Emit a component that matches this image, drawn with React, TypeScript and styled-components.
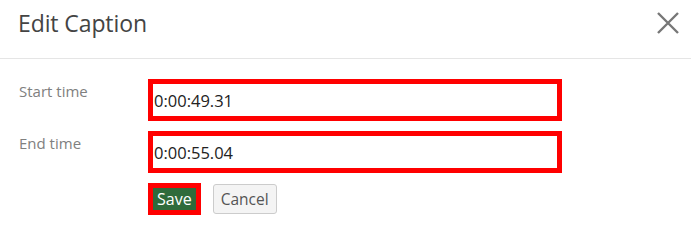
import React from "react";
import styled, { createGlobalStyle } from "styled-components";

const GlobalStyle = createGlobalStyle`
  html, body {
    margin: 0;
    padding: 0;
    background: #fff;
  }
  body {
    font-family: "Open Sans", "Noto Sans", sans-serif;
  }
`;

const App = () => {
  return (
    <>
      <GlobalStyle />
      <Modal>
        <Header>
          <Title>Edit Caption</Title>
          <CloseButton aria-label="Close">
            <svg width="22" height="22" viewBox="0 0 22 22">
              <path
                d="M1 1 L21 21 M21 1 L1 21"
                stroke="#777"
                strokeWidth="2.4"
                fill="none"
              />
            </svg>
          </CloseButton>
        </Header>

        <Body>
          <Row>
            <Label htmlFor="start">Start time</Label>
            <TimeInput id="start" defaultValue="0:00:49.31" />
          </Row>
          <Row>
            <Label htmlFor="end">End time</Label>
            <TimeInput id="end" defaultValue="0:00:55.04" />
          </Row>
          <Actions>
            <SaveButton type="button">Save</SaveButton>
            <CancelButton type="button">Cancel</CancelButton>
          </Actions>
        </Body>
      </Modal>
    </>
  );
};

export default App;

const Modal = styled.div`
  width: 691px;
  height: 238px;
  background: #fff;
`;

const Header = styled.div`
  display: flex;
  align-items: center;
  justify-content: space-between;
  height: 58px;
  padding: 0 12px 0 18px;
  border-bottom: 1px solid #e5e5e5;
`;

const Title = styled.h4`
  margin: 0;
  padding-bottom: 12px;
  font-size: 23px;
  font-weight: 400;
  color: #444;
  letter-spacing: -0.1px;
`;

const CloseButton = styled.button`
  display: flex;
  padding: 0;
  border: none;
  background: none;
  margin-bottom: 12px;
`;

const Body = styled.div`
  display: flex;
  flex-direction: column;
  gap: 10px;
  padding: 20px 0 0 19px;
`;

const Row = styled.div`
  display: flex;
  align-items: flex-start;
`;

const Label = styled.label`
  width: 129px;
  padding-top: 2px;
  font-size: 15px;
  color: #808080;
`;

const TimeInput = styled.input`
  box-sizing: border-box;
  width: 414px;
  height: 42px;
  padding: 0 1px;
  border: 5px solid #ff0000;
  outline: none;
  font-family: "Open Sans", "Noto Sans", sans-serif;
  font-size: 16.5px;
  color: #222;
`;

const Actions = styled.div`
  display: flex;
  align-items: flex-start;
  gap: 12px;
  padding-left: 129px;
`;

const SaveButton = styled.button`
  box-sizing: border-box;
  height: 32px;
  padding: 0 4px;
  border: 5px solid #ff0000;
  background: #2f6b3b;
  color: #fff;
  font-family: "Open Sans", "Noto Sans", sans-serif;
  font-size: 16px;
  line-height: 1;
`;

const CancelButton = styled.button`
  box-sizing: border-box;
  height: 30px;
  margin-top: 1px;
  padding: 0 7px;
  border: 1px solid #ccc;
  border-radius: 3px;
  background: #f4f4f4;
  color: #555;
  font-family: "Open Sans", "Noto Sans", sans-serif;
  font-size: 15.5px;
`;
